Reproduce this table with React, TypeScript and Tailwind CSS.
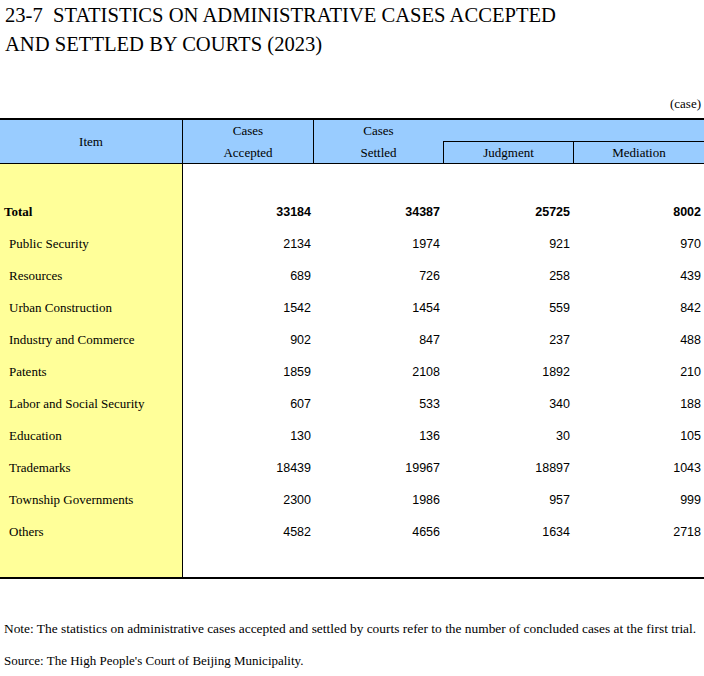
import React from 'react';

interface Row {
  item: string;
  accepted: number;
  settled: number;
  judgment: number;
  mediation: number;
  total?: boolean;
}

const rows: Row[] = [
  { item: 'Total', accepted: 33184, settled: 34387, judgment: 25725, mediation: 8002, total: true },
  { item: 'Public Security', accepted: 2134, settled: 1974, judgment: 921, mediation: 970 },
  { item: 'Resources', accepted: 689, settled: 726, judgment: 258, mediation: 439 },
  { item: 'Urban Construction', accepted: 1542, settled: 1454, judgment: 559, mediation: 842 },
  { item: 'Industry and Commerce', accepted: 902, settled: 847, judgment: 237, mediation: 488 },
  { item: 'Patents', accepted: 1859, settled: 2108, judgment: 1892, mediation: 210 },
  { item: 'Labor and Social Security', accepted: 607, settled: 533, judgment: 340, mediation: 188 },
  { item: 'Education', accepted: 130, settled: 136, judgment: 30, mediation: 105 },
  { item: 'Trademarks', accepted: 18439, settled: 19967, judgment: 18897, mediation: 1043 },
  { item: 'Township Governments', accepted: 2300, settled: 1986, judgment: 957, mediation: 999 },
  { item: 'Others', accepted: 4582, settled: 4656, judgment: 1634, mediation: 2718 },
];

const serif = "font-['Liberation_Serif','Times_New_Roman',serif]";
const sans = "font-['Liberation_Sans',Arial,sans-serif]";
const cols = 'grid grid-cols-[183px_131px_129px_130px_131px]';

export default function App() {
  return (
    <div className={`w-[704px] h-[676px] bg-white text-black ${serif}`}>
      {/* Title */}
      <h1 className="pl-[5px] pt-[1px] text-[20.6px] leading-[29px] font-normal">
        23-7&nbsp; STATISTICS ON ADMINISTRATIVE CASES ACCEPTED
        <br />
        AND SETTLED BY COURTS (2023)
      </h1>

      <div className="mt-[37px] pr-[3px] text-right text-[13px] leading-[16px]">(case)</div>

      {/* Table */}
      <div className="mt-[6px] border-t-[2px] border-black">
        {/* Header */}
        <div className={`${cols} grid-rows-[22px_21px] bg-[#99ccff] text-[13px] border-b border-black`}>
          <div className="row-span-2 flex items-center justify-center border-r border-black">Item</div>
          <div className="row-span-2 flex flex-col items-center justify-center gap-[6px] border-r border-black leading-[16px]">
            <span>Cases</span>
            <span>Accepted</span>
          </div>
          <div className="flex items-center justify-center">Cases</div>
          <div className="col-span-2 border-b border-black" />
          <div className="flex items-center justify-center">Settled</div>
          <div className="flex items-center justify-center border-l border-black">Judgment</div>
          <div className="flex items-center justify-center border-l border-black">Mediation</div>
        </div>

        {/* Body */}
        <div className={`${cols} border-b-[2px] border-black`}>
          <div className="h-[32px] bg-[#ffff99] border-r border-black" />
          <div className="col-span-4" />
          {rows.map((r) => (
            <React.Fragment key={r.item}>
              <div
                className={`h-[32px] flex items-center bg-[#ffff99] border-r border-black text-[13px] ${
                  r.total ? 'pl-[4px] font-bold' : 'pl-[9px]'
                }`}
              >
                {r.item}
              </div>
              {[r.accepted, r.settled, r.judgment, r.mediation].map((v, i) => (
                <div
                  key={i}
                  className={`h-[32px] flex items-center justify-end pr-[3px] text-[12.5px] ${sans} ${
                    r.total ? 'font-bold' : ''
                  }`}
                >
                  {v}
                </div>
              ))}
            </React.Fragment>
          ))}
          <div className="h-[29px] bg-[#ffff99] border-r border-black" />
          <div className="col-span-4" />
        </div>
      </div>

      {/* Notes */}
      <div className="mt-[34px] pl-[4px] leading-[32px]">
        <p className="text-[13.4px] whitespace-nowrap">
          Note: The statistics on administrative cases accepted and settled by courts refer to the number of concluded cases at the first trial.
        </p>
        <p className="text-[13px]">Source: The High People's Court of Beijing Municipality.</p>
      </div>
    </div>
  );
}
